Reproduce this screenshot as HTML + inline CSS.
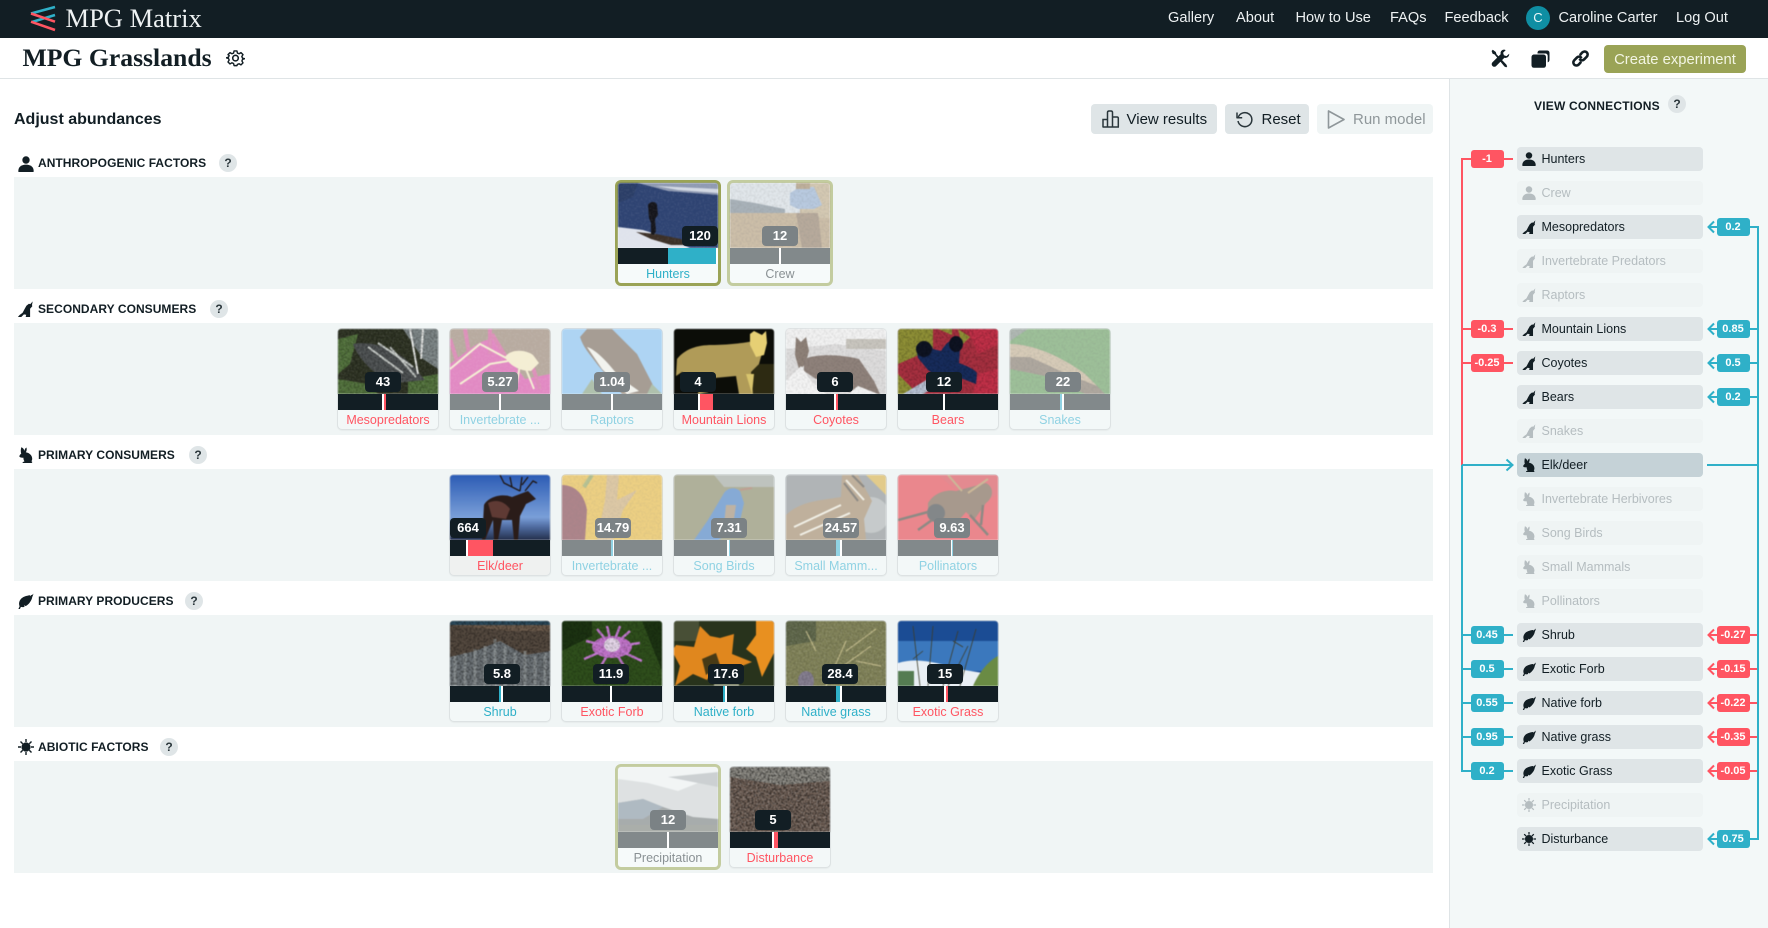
<!DOCTYPE html>
<html lang="en"><head><meta charset="utf-8"><title>MPG Grasslands</title>
<style>
*{box-sizing:border-box}
html,body{margin:0;padding:0}
body{width:1768px;height:928px;overflow:hidden;position:relative;background:#fff;font-family:"Liberation Sans",sans-serif;color:#121e24}
.a{position:absolute;white-space:nowrap}
.nav{top:0;height:38px;line-height:37.500px;font-size:14.600px;color:#eef2f3}
.panel{position:absolute;left:14px;width:1419px;height:112px;background:#f0f5f5}
.sec{position:absolute;font-size:12px;font-weight:700;line-height:16px;white-space:nowrap;letter-spacing:.05px}
.q{position:absolute;width:18px;height:18px;border-radius:50%;background:#dfe5e7;font-size:12px;font-weight:700;line-height:18px;text-align:center;color:#2a363b}
.btn{position:absolute;top:104px;height:30px;border-radius:4px;background:#dfe5e7;font-size:15px;line-height:32px}
.c{position:absolute;width:100px;height:100px;border-radius:4px;background:#f3f8f8;box-shadow:0 0 0 1px #dde2e3,0 1px 1px 1px rgba(0,0,0,.04)}
.c>svg{position:absolute;left:0;top:0;width:100px;height:65px;display:block;border-radius:3px 3px 0 0;filter:blur(.6px)}
.c .b{position:absolute;left:0;top:65px;width:100px;height:16px;background:#121e24}
.c .b i{position:absolute;top:0;height:16px;display:block}
.c .t{position:absolute;top:43px;width:36px;height:20px;border-radius:4px;background:#121e24;color:#fff;font-size:13px;font-weight:700;line-height:20px;text-align:center}
.c .l{position:absolute;left:0;top:81px;width:100px;height:19px;line-height:20.500px;font-size:12.500px;text-align:center;white-space:nowrap;overflow:hidden}
.r{color:#ff5562}.g{color:#2fb0c8}.m{color:#90d2e3}.y{color:#8a9194}
.f>svg{opacity:.5}.f .b{background:#82898b}.f .t{background:#7b8285}
.sel{box-shadow:0 0 0 3px #9aa356;background:#f6fafa;border-radius:3px}
.sel2{box-shadow:0 0 0 3px #c3cc9f;background:#f6fafa;border-radius:3px}
.w{background:#fff}.tq{background:#2fb0c8}.rd{background:#ff5562}.lt{background:#90d2e3}
.row{position:absolute;left:1517px;width:186px;height:24px;border-radius:4px;background:#dfe5e7;font-size:12.500px;line-height:24px;padding-left:24.500px;color:#121e24;white-space:nowrap}
.row svg{position:absolute;left:5px;top:5px;width:14px;height:14px;fill:#121e24}
.row.o{background:#eff4f4;color:#b5bdc0}.row.o svg{fill:#b5bdc0}
.bd{position:absolute;width:33px;height:18px;border-radius:3px;color:#fff;font-size:11px;font-weight:700;line-height:18px;text-align:center;z-index:3}
.i{position:absolute;fill:#121e24}
</style></head><body>
<svg width="0" height="0" style="position:absolute"><defs>
<filter id="n" x="0" y="0" width="100%" height="100%"><feTurbulence type="fractalNoise" baseFrequency=".5" numOctaves="2" seed="3"/><feColorMatrix values="0 0 0 0 0 0 0 0 0 0 0 0 0 0 0 0 0 0 4 -1.700"/></filter>
<filter id="nw" x="0" y="0" width="100%" height="100%"><feTurbulence type="fractalNoise" baseFrequency=".6" numOctaves="2" seed="8"/><feColorMatrix values="0 0 0 0 1 0 0 0 0 1 0 0 0 0 1 0 0 0 4 -1.900"/></filter>
<symbol id="person" viewBox="0 0 16 16"><circle cx="8" cy="4" r="3.700"/><path d="M.3 15.200C.3 11 3.200 8.600 8 8.600s7.700 2.400 7.700 6.600c0 .5-.3.8-.8.8H1.100c-.5 0-.8-.3-.8-.8z"/></symbol>
<symbol id="wolf" viewBox="0 0 16 16"><path d="M15.200.4 14.500 4l.3 1.200-2.200 2.600V16H8.200l.5-2.200-2.300-.4L3.800 16H.4l1.700-2 3-2.200 2-3.800 1.800-3.200 2.500-2 1.400.3z"/></symbol>
<symbol id="rabbit" viewBox="0 0 16 16"><path d="M3.200.3c1.600.4 2.800 1.800 3.200 3.600.2-1.400.9-2.700 2-3.400.6 1.500.3 3.400-.6 4.800 3.700.6 6.400 3.200 6.400 6.500 0 1-.3 1.800-.8 2.500l1 .7-1 1.400H5.200c-.7 0-.9-.9-.3-1.300l1.600-.9c-.8-.9-1.200-2.200-1-3.500-1.600.2-3.400-.2-4-.9-.5-.6.4-2.400 1.700-3.100-.5-1.900-.6-3.700 0-5.900z"/></symbol>
<symbol id="leaf" viewBox="0 0 16 16"><path d="M15.800.6c-.5 1-1.300 1.400-2.200 1.500L13 3.300l-.4-1C9 2.700 5 3.800 3 6.500c-1.700 2.300-1.800 5-.9 6.800L.9 16l1.300.4 1.200-2.500c1.100.4 2.400.3 3.600-.2l-.2-1.600 1.400 1c3.200-1.700 6-5.500 6.500-9 .7-1.300 1.300-2.900 1.100-4z"/></symbol>
<symbol id="sun" viewBox="0 0 16 16"><circle cx="8" cy="8" r="4.600"/><path d="M7.300 0h1.400v3H7.300zM7.300 13h1.400v3H7.300zM0 7.300h3v1.400H0zM13 7.300h3v1.400h-3zM2 3 3 2l2.200 2.200-1 1zM10.800 11.800l1-1L14 13l-1 1zM2 13l2.200-2.200 1 1L3 14zM10.800 4.200 13 2l1 1-2.200 2.200z"/></symbol>
</defs></svg>

<!-- header -->
<div class="a" style="left:0;top:0;width:1768px;height:38px;background:#121e24"></div>
<svg class="a" style="left:0;top:0" width="70" height="38"><g stroke-width="2.600" fill="none"><path d="M55 7 31 13.500M55 15 32 22" stroke="#2fb0c8"/><path d="M31 13.500 55 21.700M31 21.700 55 30" stroke="#ff5562"/></g></svg>
<div class="a" style="left:65.500px;top:0;height:38px;line-height:37px;font-family:'Liberation Serif',serif;font-size:26.500px;color:#eef2f3">MPG Matrix</div>
<div class="a nav" style="left:1168px">Gallery</div>
<div class="a nav" style="left:1236px">About</div>
<div class="a nav" style="left:1295.500px">How to Use</div>
<div class="a nav" style="left:1390px">FAQs</div>
<div class="a nav" style="left:1444.500px">Feedback</div>
<div class="a" style="left:1526px;top:6px;width:24px;height:24px;border-radius:50%;background:#0f8ea3;color:#e9f6f8;font-size:13px;line-height:24px;text-align:center">C</div>
<div class="a nav" style="left:1558.500px">Caroline Carter</div>
<div class="a nav" style="left:1676px">Log Out</div>

<!-- title bar -->
<div class="a" style="left:0;top:78px;width:1768px;height:1px;background:#dfe4e6"></div>
<div class="a" style="left:22.500px;top:38px;height:40px;line-height:40px;font-family:'Liberation Serif',serif;font-weight:700;font-size:25.700px">MPG Grasslands</div>
<svg class="a" style="left:226px;top:49px" width="19" height="19" viewBox="0 0 24 24" fill="none" stroke="#121e24" stroke-width="2" stroke-linejoin="round"><path d="M10 2h4l.7 3 2.300 1 2.700-1.600 2.800 2.900-1.600 2.600 1 2.300 3 .7v0l-3 1-.9 2.200 1.500 2.700-2.800 2.800-2.700-1.600-2.300 1L14 22.700h-4l-.7-3-2.300-1-2.700 1.600-2.800-2.800 1.600-2.700-1-2.300-3-.8h0l3-.8 1-2.300L1.500 7.300l2.800-2.900L7 6l2.300-1z" transform="translate(1.200 .6) scale(.9)"/><circle cx="12" cy="11.500" r="3.500"/></svg>
<!-- toolbar icons -->
<svg class="a" style="left:1491px;top:49px" width="19" height="19" viewBox="0 0 19 19" fill="#121e24"><path d="M1.800.8.600 2l1 2.800 2 .7 9.800 12 1.900.9.900-1-.9-1.900L5.500 5.300 4.800 3z"/><path d="M13 .6c-2.300 0-4 2.200-3.300 4.500L1.500 13.200C.3 14.400.6 16 1.500 17s2.600 1.100 3.700 0l8.200-8.200c2.500.7 5-1.300 4.800-4l-2.700 2.300-2.600-.8-.8-2.500 2.600-2.700c-.5-.3-1.100-.5-1.700-.5z"/></svg>
<svg class="a" style="left:1530.500px;top:49.500px" width="19" height="18" viewBox="0 0 19 18" fill="#121e24"><path d="M6.500 2.800c0-1.300.9-2.300 2.200-2.300h7.500c1.300 0 2.300 1 2.300 2.300v7c0 1.300-.6 2.200-1.800 2.600V6c0-1.500-1-2.500-2.500-2.500H6.500z"/><rect x=".5" y="4.500" width="14.500" height="13.300" rx="2.500"/></svg>
<svg class="a" style="left:1571px;top:49px" width="19" height="19" viewBox="0 0 19 19" fill="none" stroke="#121e24" stroke-width="2.600" stroke-linecap="round"><path d="M9.500 5.500 11 3.700c1.500-1.500 3.500-1.500 4.700-.4 1.300 1.300 1.200 3.200-.1 4.600L13 10.500c-1.200 1.100-2.900 1.100-4 .1"/><path d="M9.500 13.500 8 15.300c-1.500 1.500-3.500 1.500-4.700.4-1.300-1.300-1.200-3.200.1-4.600L6 8.500c1.200-1.100 2.900-1.100 4-.1"/></svg>
<div class="a" style="left:1604px;top:45px;width:142px;height:28px;border-radius:4px;background:#9aa356;color:#f3f5e4;font-size:14.800px;line-height:30px;text-align:center">Create experiment</div>

<!-- main heading & buttons -->
<div class="a" style="left:14px;top:110px;line-height:20px;font-size:16px;font-weight:700">Adjust abundances</div>
<div class="btn" style="left:1091px;width:126px"><span class="a" style="left:35.500px;top:0">View results</span><svg class="a" style="left:10.500px;top:6px" width="18" height="18" viewBox="0 0 18 18" fill="none" stroke="#2a363b" stroke-width="1.500"><path d="M1 17V9.500h4.500V17M5.500 17V2.500C5.500 1.500 6 1 7 1h2c1 0 1.500.5 1.500 1.500V17M10.500 17V7H15c.8 0 1.300.5 1.300 1.300V17M.5 17h16.500"/></svg></div>
<div class="btn" style="left:1225px;width:84px"><span class="a" style="left:36.500px;top:0">Reset</span><svg class="a" style="left:10.500px;top:7px" width="17" height="17" viewBox="0 0 17 17" fill="none" stroke="#2a363b" stroke-width="1.500"><path d="M2.200 6.500A7 7 0 1 1 2 10" /><path d="M1 1.500v5.200h5.200" stroke-linejoin="round"/></svg></div>
<div class="btn" style="left:1317px;width:116px;background:#f0f5f5;color:#8f979a"><span class="a" style="left:36px;top:0">Run model</span><svg class="a" style="left:9.500px;top:5.500px" width="19" height="19" viewBox="0 0 19 19" fill="none" stroke="#8f979a" stroke-width="1.600" stroke-linejoin="round"><path d="M1.500 1v17l15.500-8.500z"/></svg></div>

<!-- sections -->
<svg class="i" style="left:18px;top:156px" width="16" height="16"><use href="#person"/></svg>
<div class="sec" style="left:38px;top:155px">ANTHROPOGENIC FACTORS</div><div class="q" style="left:219px;top:154px">?</div>
<div class="panel" style="top:177px"></div>
<svg class="i" style="left:17px;top:301px" width="17" height="16"><use href="#wolf"/></svg>
<div class="sec" style="left:38px;top:301px">SECONDARY CONSUMERS</div><div class="q" style="left:210px;top:300px">?</div>
<div class="panel" style="top:323px"></div>
<svg class="i" style="left:18px;top:447px" width="16" height="16"><use href="#rabbit"/></svg>
<div class="sec" style="left:38px;top:447px">PRIMARY CONSUMERS</div><div class="q" style="left:189px;top:446px">?</div>
<div class="panel" style="top:469px"></div>
<svg class="i" style="left:17px;top:593px" width="17" height="16"><use href="#leaf"/></svg>
<div class="sec" style="left:38px;top:593px">PRIMARY PRODUCERS</div><div class="q" style="left:185px;top:592px">?</div>
<div class="panel" style="top:615px"></div>
<svg class="i" style="left:18px;top:739px" width="16" height="16"><use href="#sun"/></svg>
<div class="sec" style="left:38px;top:739px">ABIOTIC FACTORS</div><div class="q" style="left:160px;top:738px">?</div>
<div class="panel" style="top:761px"></div>

<!-- row 1 -->
<div class="c sel" style="left:618px;top:183px"><svg viewBox="0 0 100 65" preserveAspectRatio="none"><rect width="100" height="65" fill="#2e4372"/><path d="M0 0h20l30 8 50 4V0z" fill="#8f9ab2"/><path d="M0 0h20l-5 14L0 20z" fill="#2a3d66"/><path d="M38 3 100 6v4L60 7z" fill="#d3d9e4"/><path d="M0 44l25 3 25 8 22 10H0z" fill="#dfe3ec"/><path d="M18 49l20 2 25 5 10 6-20 0-20-6z" fill="#3b2f26"/><path d="M30 22c2-4 8-4 9 0l1 10-3 4 1 12-2 4-3-1 0-11-2-5z" fill="#14141a"/><rect width="100" height="65" filter="url(#nw)" opacity=".08"/></svg><div class="b"><i class="tq" style="left:50px;width:48px"></i><i class="w" style="left:98px;width:2px"></i></div><div class="t" style="left:64px">120</div><div class="l g">Hunters</div></div>

<div class="c f sel2" style="left:730px;top:183px"><svg viewBox="0 0 100 65" preserveAspectRatio="none"><rect width="100" height="65" fill="#a98a5c"/><path d="M0 0h70v30H0z" fill="#cfd6de"/><path d="M0 16l25 4 30 6v10H0z" fill="#5d6c7a"/><path d="M0 30h100v35H0z" fill="#a5855a"/><path d="M70 0h30v35H72z" fill="#b59a6e"/><path d="M60 10l10-6 14 0 8 18-8 4-16 0-8-4z" fill="#7d9cc8"/><rect x="66" y="0" width="14" height="6" fill="#8b6a3f"/><path d="M66 30h22l4 35H72z" fill="#7a5c3f"/><rect width="100" height="65" filter="url(#n)" opacity=".15"/></svg><div class="b"><i class="w" style="left:49px;width:2px"></i></div><div class="t" style="left:32px">12</div><div class="l y">Crew</div></div>

<!-- row 2 -->
<div class="c" style="left:338px;top:329px"><svg viewBox="0 0 100 65" preserveAspectRatio="none"><rect width="100" height="65" fill="#2d3222"/><path d="M0 10 20 5l-8 30L0 45zM0 50l30 5 10 10H0zM70 50l30-5v20H70z" fill="#50703a"/><path d="M65 0h35v40l-15-10z" fill="#7c8586"/><path d="M15 15c20-4 45 6 60 22l12 14-30 3C40 50 20 30 15 15z" fill="#4b4f50"/><path d="M40 14l35 24M30 18l35 26M52 18l26 30" stroke="#c8cdc9" stroke-width="2"/><path d="M72 0l8 45M85 0l-2 30" stroke="#e8eae8" stroke-width="2"/><rect width="100" height="65" filter="url(#n)" opacity=".25"/><rect width="100" height="65" filter="url(#nw)" opacity=".1"/></svg><div class="b"><i class="w" style="left:44px;width:2px"></i><i class="rd" style="left:46px;width:2px"></i></div><div class="t" style="left:27px">43</div><div class="l r">Mesopredators</div></div>

<div class="c f" style="left:450px;top:329px"><svg viewBox="0 0 100 65" preserveAspectRatio="none"><rect width="100" height="65" fill="#7d5f49"/><path d="M0 35c20-15 30-25 45-25l30 40 25-5v20H0z" fill="#d11c8f"/><path d="M0 10l8 25M15 0l5 30M40 0l0 25M42 5l15 25M80 30l10 30" stroke="#c62a7b" stroke-width="4"/><path d="M55 28c5-8 20-8 28-2l6 8-8 8c-12 0-22-6-26-14z" fill="#f6e5b0"/><path d="M58 30 30 15 0 40M58 32 40 35 10 55M76 40l8 20M70 36 66 58" stroke="#f6e5b0" stroke-width="2" fill="none"/><rect width="100" height="65" filter="url(#nw)" opacity=".1"/></svg><div class="b"><i class="w" style="left:49px;width:2px"></i></div><div class="t" style="left:32px">5.27</div><div class="l m">Invertebrate ...</div></div>

<div class="c f" style="left:562px;top:329px"><svg viewBox="0 0 100 65" preserveAspectRatio="none"><rect width="100" height="65" fill="#6bb2f0"/><path d="M18 8 25 0h25l25 25 18 35 0 5H60L35 35C28 25 22 20 18 8z" fill="#5b4432"/><path d="M25 18c8 2 22 16 32 30l20 14-12 3L40 40z" fill="#f2efe6"/><path d="M20 65l10-15 10 15zM90 55l10 10H85z" fill="#6e8b65"/></svg><div class="b"><i class="w" style="left:49px;width:2px"></i></div><div class="t" style="left:32px">1.04</div><div class="l m">Raptors</div></div>

<div class="c" style="left:674px;top:329px"><svg viewBox="0 0 100 65" preserveAspectRatio="none"><rect width="100" height="65" fill="#0c0d08"/><path d="M70 35h30v30H75z" fill="#2d2a12"/><path d="M3 30c8-10 20-14 35-14 15 0 32-2 42-4l10 5-5 18-8 8 2 22H65l-3-18-22 2-6 14-10 2 2-14-18-8-6 4z" fill="#b09b58"/><path d="M76 5l4-3 8 4 4-4 1 12-3 12-8 2-6-12z" fill="#e6cf74"/><path d="M78 65l2-20h-8z" fill="#d8c46d"/></svg><div class="b"><i class="w" style="left:24px;width:2px"></i><i class="rd" style="left:26px;width:13px"></i></div><div class="t" style="left:6px">4</div><div class="l r">Mountain Lions</div></div>

<div class="c" style="left:786px;top:329px"><svg viewBox="0 0 100 65" preserveAspectRatio="none"><rect width="100" height="65" fill="#dedddd"/><path d="M0 0h100v22L50 15 0 20z" fill="#f2f2f2"/><path d="M60 10h40v10H60z" fill="#c9c6bf"/><path d="M10 8l5 5 5-5 3 14-4 14-6 4-4-14z" fill="#8e8178"/><path d="M18 30c15-6 40-4 55 0l15 22 6 13H65L50 48 30 50 18 42z" fill="#8f827b"/><path d="M0 65V52l15-15 10 15 15 13zM62 65l10-8 20 8z" fill="#f4f4f4"/><rect width="100" height="65" filter="url(#n)" opacity=".07"/></svg><div class="b"><i class="w" style="left:48px;width:2px"></i><i class="rd" style="left:50px;width:1.500px"></i></div><div class="t" style="left:31px">6</div><div class="l r">Coyotes</div></div>

<div class="c" style="left:898px;top:329px"><svg viewBox="0 0 100 65" preserveAspectRatio="none"><rect width="100" height="65" fill="#a83040"/><path d="M0 0h35v20L0 35zM0 45l20 20H0zM60 0l12 8-8 8zM40 0h14v6z" fill="#8f9036"/><path d="M70 0h30v15L80 25zM80 45l20-5v25H75z" fill="#c23048"/><path d="M18 18c3-6 15-6 17 2l8 2c4-6 8-12 14-10l5 8-1 14c8 3 15 6 18 10L78 55 60 48l-15 5-15-12-10-12z" fill="#172c5c"/><ellipse cx="26" cy="20" rx="8" ry="8" fill="#0e1322"/><ellipse cx="58" cy="15" rx="7" ry="8" fill="#0e1322"/><path d="M5 65l25-15 14-5-5 12-14 8z" fill="#b8c2d4"/><rect width="100" height="65" filter="url(#n)" opacity=".2"/></svg><div class="b"><i class="w" style="left:45px;width:2px"></i></div><div class="t" style="left:28px">12</div><div class="l r">Bears</div></div>

<div class="c f" style="left:1010px;top:329px"><svg viewBox="0 0 100 65" preserveAspectRatio="none"><rect width="100" height="65" fill="#4a8a3c"/><path d="M0 0h18L0 12z" fill="#6e7a70"/><path d="M0 15c25 0 55 15 75 30l20 20H75L40 48 0 40z" fill="#6d5a48"/><path d="M0 15c25 0 55 15 75 30l12 12-30-12L20 28 0 28z" fill="#bca07a"/><rect width="100" height="65" filter="url(#n)" opacity=".15"/></svg><div class="b"><i class="lt" style="left:50px;width:2px"></i><i class="w" style="left:52px;width:2px"></i></div><div class="t" style="left:35px">22</div><div class="l m">Snakes</div></div>

<!-- row 3 -->
<div class="c" style="left:450px;top:475px;background:#eff1f0"><svg viewBox="0 0 100 65" preserveAspectRatio="none"><defs><linearGradient id="k" x1="0" y1="0" x2="0" y2="1"><stop offset="0" stop-color="#2c5cb5"/><stop offset=".65" stop-color="#7a9fd8"/><stop offset=".8" stop-color="#4f6ba0"/><stop offset="1" stop-color="#24304c"/></linearGradient></defs><rect width="100" height="65" fill="url(#k)"/><path d="M34 30c4-8 18-12 28-8l16-6 8 8-10 5-6 12-2 24h-4l-2-20-10 0-4 20h-4l-1-20-8 20h-3z" fill="#2a1c19"/><path d="M38 28c8-4 16-2 22 6l-4 10-14-2z" fill="#5f3a34"/><path d="M70 16 54 8l-4-8M62 12l-2-10M70 16l2-14M72 10l6-8M75 16l8-10 4 2" stroke="#1f1613" stroke-width="1.300" fill="none"/></svg><div class="b"><i class="w" style="left:16px;width:2px"></i><i class="rd" style="left:18px;width:25px"></i></div><div class="t" style="left:0">664</div><div class="l r">Elk/deer</div></div>

<div class="c f" style="left:562px;top:475px"><svg viewBox="0 0 100 65" preserveAspectRatio="none"><rect width="100" height="65" fill="#e8a910"/><path d="M0 10c12 0 22 8 25 25l-2 30H0z" fill="#6a1420"/><path d="M45 0h12l-2 25 20-10-14 20-10 30H35l8-40z" fill="#c89a55"/><path d="M22 12 30 0" stroke="#7c8e30" stroke-width="4"/><rect width="100" height="65" filter="url(#n)" opacity=".1"/></svg><div class="b"><i class="lt" style="left:49px;width:1.500px"></i><i class="w" style="left:50.500px;width:1.500px"></i></div><div class="t" style="left:33px">14.79</div><div class="l m">Invertebrate ...</div></div>

<div class="c f" style="left:674px;top:475px"><svg viewBox="0 0 100 65" preserveAspectRatio="none"><rect width="100" height="65" fill="#6d6a3e"/><path d="M40 0h60v12H50z" fill="#8b8f86"/><path d="M50 18c4-6 12-6 16-2l4 12-4 18-14 14-8 5H20l14-20z" fill="#1c5fb4"/><path d="M52 30l10 0-2 14-10 6z" fill="#8a6f50"/><path d="M66 15l12-2" stroke="#8b4a30" stroke-width="2"/></svg><div class="b"><i class="w" style="left:53px;width:2px"></i><i class="lt" style="left:55px;width:1px"></i></div><div class="t" style="left:37px">7.31</div><div class="l m">Song Birds</div></div>

<div class="c f" style="left:786px;top:475px"><svg viewBox="0 0 100 65" preserveAspectRatio="none"><rect width="100" height="65" fill="#6f7376"/><ellipse cx="85" cy="40" rx="18" ry="18" fill="#9a9d9f"/><path d="M80 0h20v20z" fill="#d2a020"/><path d="M0 40c15-15 40-15 55-18L56 0h16l14 26-8 18 2 21H0z" fill="#8c6a42"/><path d="M8 52 55 30M14 60l50-22M60 5l18 20" stroke="#efe7d5" stroke-width="2"/><path d="M58 8l14 18M66 0l12 12" stroke="#2a1f14" stroke-width="2"/></svg><div class="b"><i class="lt" style="left:50px;width:4px"></i><i class="w" style="left:54px;width:2px"></i></div><div class="t" style="left:37px">24.57</div><div class="l m">Small Mamm...</div></div>

<div class="c f" style="left:898px;top:475px"><svg viewBox="0 0 100 65" preserveAspectRatio="none"><rect width="100" height="65" fill="#e31824"/><path d="M40 0h60v20L75 30z" fill="#d51e2a"/><path d="M30 28c6-10 18-14 28-12l30-8c8 4 8 14 0 20L76 45l-8-8-12 14-16-2-10-10z" fill="#5d3c24"/><circle cx="38" cy="38" r="9" fill="#16181d"/><path d="M0 45l30-8M20 55l14-10M72 40l18 20M85 30l-2 20" stroke="#2a1f14" stroke-width="2.500" fill="none"/><path d="M50 0l14 16M70 18l20-14" stroke="#a57a3a" stroke-width="2"/></svg><div class="b"><i class="w" style="left:52.500px;width:1.500px"></i><i class="lt" style="left:54px;width:1px"></i></div><div class="t" style="left:36px">9.63</div><div class="l m">Pollinators</div></div>

<!-- row 4 -->
<div class="c" style="left:450px;top:621px"><svg viewBox="0 0 100 65" preserveAspectRatio="none"><rect width="100" height="65" fill="#54493f"/><rect width="100" height="4" fill="#2b4a5c"/><path d="M0 4h100v6H60z" fill="#6c5b4c"/><path d="M0 36l25-6 25-10 25 14 25-4v35H0z" fill="#6c7276"/><path d="M5 65V35M15 65V32M25 65V28M35 65V25M45 65V18M55 65V25M65 65V32M75 65V30M85 65V35M95 65V32" stroke="#9ba2a2" stroke-width="3" opacity=".6"/><rect width="100" height="65" filter="url(#n)" opacity=".35"/></svg><div class="b"><i class="tq" style="left:49px;width:2px"></i><i class="w" style="left:51px;width:2px"></i></div><div class="t" style="left:34px">5.8</div><div class="l g">Shrub</div></div>

<div class="c" style="left:562px;top:621px"><svg viewBox="0 0 100 65" preserveAspectRatio="none"><rect width="100" height="65" fill="#2f4f1c"/><path d="M0 0h30v15L0 30zM80 0h20v50z" fill="#1c3312"/><ellipse cx="50" cy="26" rx="20" ry="11" fill="#bf72c6"/><path d="M50 26 35 8M50 26 45 5M50 26 58 5M50 26 68 10M50 26 78 22M50 26 80 40M50 26 24 20M50 26 22 38M50 26 36 50M50 26 64 48" stroke="#c47ad0" stroke-width="2.500"/><ellipse cx="50" cy="24" rx="8" ry="7" fill="#e4d5e8"/><rect width="100" height="65" filter="url(#n)" opacity=".2"/></svg><div class="b"><i class="w" style="left:48px;width:2px"></i></div><div class="t" style="left:31px">11.9</div><div class="l r">Exotic Forb</div></div>

<div class="c" style="left:674px;top:621px"><svg viewBox="0 0 100 65" preserveAspectRatio="none"><rect width="100" height="65" fill="#28331c"/><path d="M0 0h25v20H0z" fill="#484f36"/><path d="M2 24l18 2 6-21 10 10 10 2 14-4-2 20 20 8-20 8-15-6-10 16-14-6-18 12 5-20-8-15z" fill="#e0871e"/><path d="M82 0h18v32l-12 24-6-20-10-8 10-14z" fill="#e89020"/><path d="M28 38l14-6 4 12-14 10z" fill="#473a16"/><rect x="40" y="55" width="25" height="10" fill="#dfe0c8" opacity=".5"/></svg><div class="b"><i class="tq" style="left:49px;width:2px"></i><i class="w" style="left:51px;width:2px"></i></div><div class="t" style="left:34px">17.6</div><div class="l g">Native forb</div></div>

<div class="c" style="left:786px;top:621px"><svg viewBox="0 0 100 65" preserveAspectRatio="none"><rect width="100" height="65" fill="#7f8157"/><path d="M0 0h30v20L0 25z" fill="#5d6548"/><ellipse cx="20" cy="60" rx="8" ry="10" fill="#817a8c"/><path d="M40 65 60 20M60 30l30-22M70 40l25 5M30 30 20 10M50 50 85 25" stroke="#bfb888" stroke-width="1.200" fill="none"/><rect width="100" height="65" filter="url(#nw)" opacity=".12"/><rect width="100" height="65" filter="url(#n)" opacity=".12"/></svg><div class="b"><i class="tq" style="left:50px;width:4px"></i><i class="w" style="left:54px;width:2px"></i></div><div class="t" style="left:36px">28.4</div><div class="l g">Native grass</div></div>

<div class="c" style="left:898px;top:621px"><svg viewBox="0 0 100 65" preserveAspectRatio="none"><rect width="100" height="65" fill="#1b4c94"/><rect y="20" width="100" height="30" fill="#3b78bd"/><path d="M0 42c20-6 40 0 60 6l25 4 15-3v16H0z" fill="#e9eff4"/><path d="M75 65c5-12 15-25 25-30v30z" fill="#6a8b44"/><path d="M0 50h16v15H0z" fill="#557c52"/><path d="M22 65 15 5M30 65 35 5M45 65 60 10M50 65 70 25M62 65 78 8M25 30l-10 8M55 20l10 6" stroke="#3d3d2a" stroke-width=".8" fill="none"/></svg><div class="b"><i class="w" style="left:46px;width:1.500px"></i><i class="rd" style="left:47.500px;width:2px"></i></div><div class="t" style="left:29px">15</div><div class="l r">Exotic Grass</div></div>

<!-- row 5 -->
<div class="c f sel2" style="left:618px;top:767px"><svg viewBox="0 0 100 65" preserveAspectRatio="none"><rect width="100" height="65" fill="#c7cacb"/><path d="M0 0h100v8L60 24 30 16 0 12z" fill="#eff1f2"/><path d="M50 10l50-5v15z" fill="#a3a8ab"/><path d="M0 36l25-4 20 8 30 10 25 2v13H0z" fill="#5b6061"/><path d="M0 36l25-4 20 8-20 12H0z" fill="#6b7c8c"/><rect y="58" width="100" height="7" fill="#60645c"/></svg><div class="b"><i class="w" style="left:49px;width:1.500px"></i></div><div class="t" style="left:32px">12</div><div class="l y">Precipitation</div></div>

<div class="c" style="left:730px;top:767px"><svg viewBox="0 0 100 65" preserveAspectRatio="none"><rect width="100" height="65" fill="#6a5a50"/><path d="M0 0h100v14L50 18 0 10z" fill="#83817a"/><rect width="100" height="65" filter="url(#n)" opacity=".5"/><rect width="100" height="65" filter="url(#nw)" opacity=".25"/></svg><div class="b"><i class="w" style="left:42px;width:1.500px"></i><i class="rd" style="left:43.500px;width:4.500px"></i></div><div class="t" style="left:25px">5</div><div class="l r">Disturbance</div></div>

<!-- side panel -->
<div class="a" style="left:1449px;top:79px;width:319px;height:849px;background:#f3f8f8;border-left:1px solid #dfe4e6"></div>
<div class="a" style="left:1534px;top:98px;line-height:16px;font-size:12px;font-weight:700;letter-spacing:.2px">VIEW CONNECTIONS</div>
<div class="q" style="left:1668px;top:95px">?</div>

<svg class="a" style="left:0;top:0;z-index:2" width="1768" height="928" fill="none" stroke-width="2">
<g stroke="#ff5562"><path d="M1513 159H1462V465M1462 329H1513M1462 363H1513"/>
<path d="M1758 635H1709M1758 669H1709M1758 703H1709M1758 737H1709M1758 771H1709"/>
<path d="M1714 629.500 1708.500 635 1714 640.500M1714 663.500 1708.500 669 1714 674.500M1714 697.500 1708.500 703 1714 708.500M1714 731.500 1708.500 737 1714 742.500M1714 765.500 1708.500 771 1714 776.500"/></g>
<g stroke="#2fb0c8"><path d="M1462 465V771H1513M1462 465H1512M1506.500 459.500 1512.500 465 1506.500 470.500M1462 635H1513M1462 669H1513M1462 703H1513M1462 737H1513"/>
<path d="M1709 227H1759M1709 329H1758M1709 363H1758M1709 397H1758M1707 465H1758M1709 839H1759"/>
<path d="M1758 226V840"/>
<path d="M1714 221.500 1708.500 227 1714 232.500M1714 323.500 1708.500 329 1714 334.500M1714 357.500 1708.500 363 1714 368.500M1714 391.500 1708.500 397 1714 402.500M1714 833.500 1708.500 839 1714 844.500"/></g>
</svg>

<div class="row" style="top:147px"><svg><use href="#person"/></svg>Hunters</div>
<div class="row o" style="top:181px"><svg><use href="#person"/></svg>Crew</div>
<div class="row" style="top:215px"><svg><use href="#wolf"/></svg>Mesopredators</div>
<div class="row o" style="top:249px"><svg><use href="#wolf"/></svg>Invertebrate Predators</div>
<div class="row o" style="top:283px"><svg><use href="#wolf"/></svg>Raptors</div>
<div class="row" style="top:317px"><svg><use href="#wolf"/></svg>Mountain Lions</div>
<div class="row" style="top:351px"><svg><use href="#wolf"/></svg>Coyotes</div>
<div class="row" style="top:385px"><svg><use href="#wolf"/></svg>Bears</div>
<div class="row o" style="top:419px"><svg><use href="#wolf"/></svg>Snakes</div>
<div class="row" style="top:453px;background:#c5d2d7"><svg><use href="#rabbit"/></svg>Elk/deer</div>
<div class="row o" style="top:487px"><svg><use href="#rabbit"/></svg>Invertebrate Herbivores</div>
<div class="row o" style="top:521px"><svg><use href="#rabbit"/></svg>Song Birds</div>
<div class="row o" style="top:555px"><svg><use href="#rabbit"/></svg>Small Mammals</div>
<div class="row o" style="top:589px"><svg><use href="#rabbit"/></svg>Pollinators</div>
<div class="row" style="top:623px"><svg><use href="#leaf"/></svg>Shrub</div>
<div class="row" style="top:657px"><svg><use href="#leaf"/></svg>Exotic Forb</div>
<div class="row" style="top:691px"><svg><use href="#leaf"/></svg>Native forb</div>
<div class="row" style="top:725px"><svg><use href="#leaf"/></svg>Native grass</div>
<div class="row" style="top:759px"><svg><use href="#leaf"/></svg>Exotic Grass</div>
<div class="row o" style="top:793px"><svg><use href="#sun"/></svg>Precipitation</div>
<div class="row" style="top:827px"><svg><use href="#sun"/></svg>Disturbance</div>

<div class="bd rd" style="left:1470.500px;top:150px">-1</div>
<div class="bd rd" style="left:1470.500px;top:320px">-0.3</div>
<div class="bd rd" style="left:1470.500px;top:354px">-0.25</div>
<div class="bd tq" style="left:1470.500px;top:626px">0.45</div>
<div class="bd tq" style="left:1470.500px;top:660px">0.5</div>
<div class="bd tq" style="left:1470.500px;top:694px">0.55</div>
<div class="bd tq" style="left:1470.500px;top:728px">0.95</div>
<div class="bd tq" style="left:1470.500px;top:762px">0.2</div>
<div class="bd tq" style="left:1716.500px;top:218px">0.2</div>
<div class="bd tq" style="left:1716.500px;top:320px">0.85</div>
<div class="bd tq" style="left:1716.500px;top:354px">0.5</div>
<div class="bd tq" style="left:1716.500px;top:388px">0.2</div>
<div class="bd rd" style="left:1716.500px;top:626px">-0.27</div>
<div class="bd rd" style="left:1716.500px;top:660px">-0.15</div>
<div class="bd rd" style="left:1716.500px;top:694px">-0.22</div>
<div class="bd rd" style="left:1716.500px;top:728px">-0.35</div>
<div class="bd rd" style="left:1716.500px;top:762px">-0.05</div>
<div class="bd tq" style="left:1716.500px;top:830px">0.75</div>
</body></html>
